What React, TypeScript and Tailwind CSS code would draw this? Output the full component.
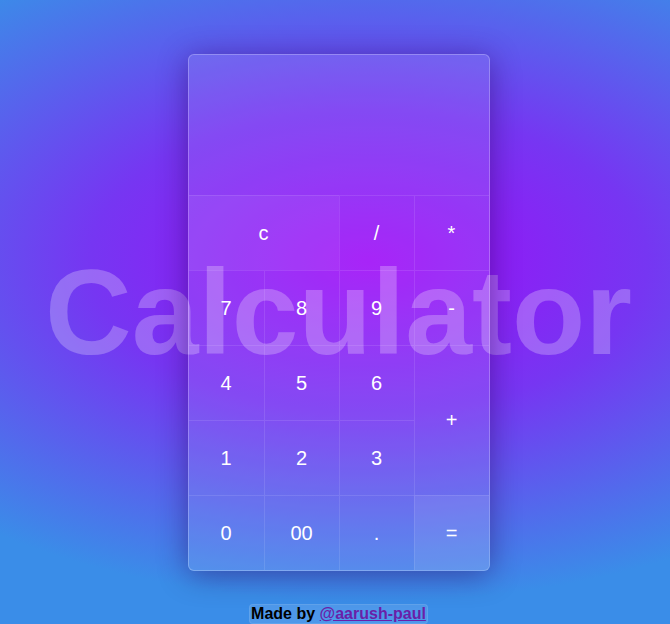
const cell = 'flex items-center justify-center text-white text-[20px] border-t border-white/10';

export default function App() {
  return (
    <div className="relative h-screen w-full overflow-hidden bg-[radial-gradient(ellipse_620px_340px_at_55%_42%,#9e0cf8_0%,#7636f2_45%,#3a8de8_100%)] font-['Liberation_Sans',Arial,sans-serif]">
      {/* big watermark title */}
      <div className="absolute inset-0 flex items-center justify-center pl-[7px]">
        <h1 className="text-[120px] font-bold leading-none text-white/25 select-none">
          Calculator
        </h1>
      </div>

      <div className="relative flex h-full items-center justify-center pl-[7px]">
        <div className="w-[302px] rounded-md border border-white/25 bg-white/10 overflow-hidden shadow-[0_4px_30px_rgba(30,0,80,0.45)]">
          <div className="h-[140px]" />
          <div className="grid grid-cols-4 auto-rows-[75px]">
            <button className={`${cell} col-span-2 bg-white/5 font-medium`}>c</button>
            <button className={`${cell} border-l`}>/</button>
            <button className={`${cell} border-l`}>*</button>

            <button className={cell}>7</button>
            <button className={`${cell} border-l`}>8</button>
            <button className={`${cell} border-l`}>9</button>
            <button className={`${cell} border-l`}>-</button>

            <button className={cell}>4</button>
            <button className={`${cell} border-l`}>5</button>
            <button className={`${cell} border-l`}>6</button>
            <button className={`${cell} border-l row-span-2`}>+</button>

            <button className={cell}>1</button>
            <button className={`${cell} border-l`}>2</button>
            <button className={`${cell} border-l`}>3</button>

            <button className={cell}>0</button>
            <button className={`${cell} border-l`}>00</button>
            <button className={`${cell} border-l`}>.</button>
            <button className={`${cell} border-l bg-white/[0.07]`}>=</button>
          </div>
        </div>
      </div>

      <div className="absolute bottom-0 left-0 right-0 flex justify-center pl-[7px]">
        <p className="rounded border border-white/10 bg-white/10 px-px text-base font-bold leading-[18px] text-black">
          Made by{' '}
          <a href="#" className="text-[#6a1fa8] underline">
            @aarush-paul
          </a>
        </p>
      </div>
    </div>
  );
}
